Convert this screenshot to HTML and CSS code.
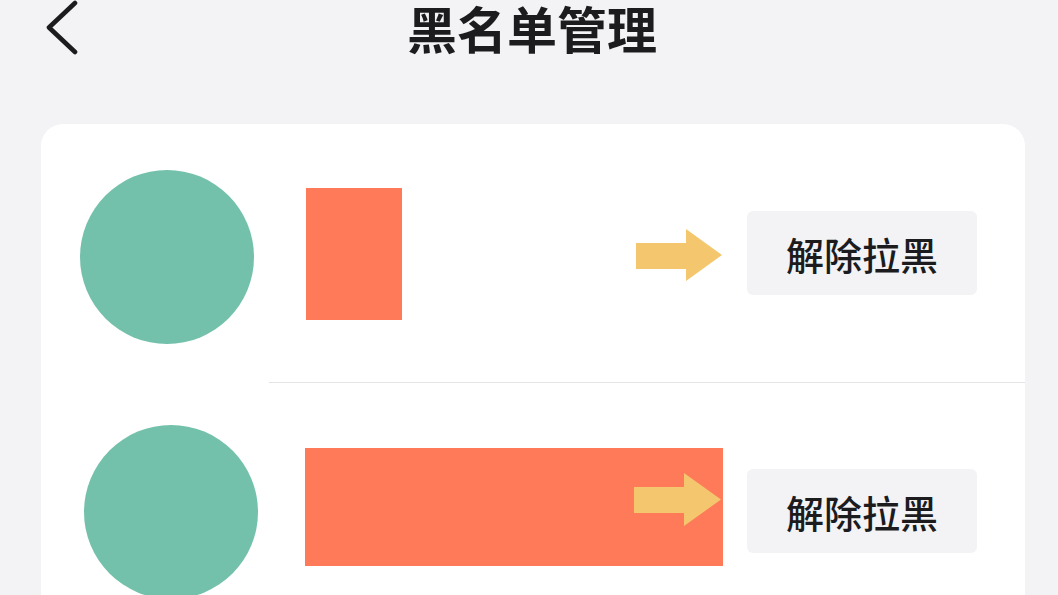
FILE: index.html
```html
<!DOCTYPE html>
<html lang="zh-CN">
<head>
<meta charset="utf-8">
<title>黑名单管理</title>
<link rel="stylesheet" href="styles.css">
</head>
<body>
<header class="header">
  <div class="back">
    <svg width="34" height="58" viewBox="0 0 34 58" aria-hidden="true">
      <path d="M30 3 L4 27.5 L30 52" fill="none" stroke="#1c1c1e" stroke-width="4.6" stroke-linecap="round" stroke-linejoin="round"/>
    </svg>
  </div>
  <h1 class="title">黑名单管理</h1>
  <div></div>
</header>
<main class="card">
  <div class="row">
    <div class="avatar avatar-first"></div>
    <div class="redact redact-first"></div>
    <div class="actions">
      <svg class="arrow" width="86" height="52" viewBox="0 0 86 52" aria-hidden="true">
        <polygon points="0,14 50,14 50,0 86,26 50,52 50,40 0,40" fill="#f4c76f"/>
      </svg>
      <button class="unblock">解除拉黑</button>
    </div>
  </div>
  <div class="divider"></div>
  <div class="row">
    <div class="avatar avatar-second"></div>
    <div class="redact redact-second">
      <svg class="arrow-inner" width="87" height="53" viewBox="0 0 87 53" aria-hidden="true">
        <polygon points="0,14 50,14 50,0 87,26.5 50,53 50,40 0,40" fill="#f4c76f"/>
      </svg>
    </div>
    <div class="actions">
      <button class="unblock unblock-second">解除拉黑</button>
    </div>
  </div>
</main>
</body>
</html>
```

FILE: styles.css
```css
* { box-sizing: border-box; }

html, body {
  margin: 0;
  padding: 0;
  height: 100%;
  overflow: hidden;
}

body {
  background: #f3f3f5;
  font-family: "Noto Sans CJK SC", "Noto Sans", sans-serif;
  color: #1c1c1e;
  width: 1058px;
}

.header {
  height: 62px;
  display: grid;
  grid-template-columns: 1fr auto 1fr;
  align-items: start;
}

.back {
  padding-left: 45px;
  line-height: 0;
}

.title {
  margin: 0;
  font-size: 50px;
  font-weight: 700;
  line-height: 54px;
  padding-left: 6px;
  color: #1c1c1e;
}

.card {
  margin: 62px 0 0 41px;
  width: 984px;
  background: #ffffff;
  border-radius: 22px 22px 0 0;
}

.row {
  height: 258px;
  display: flex;
  align-items: center;
}

.avatar {
  width: 174px;
  height: 174px;
  border-radius: 50%;
  background: #73c1aa;
  flex: none;
}

.avatar-first {
  margin-left: 39px;
  margin-top: 8px;
}

.avatar-second {
  margin-left: 43px;
}

.redact {
  background: #fe7a59;
  flex: none;
}

.redact-first {
  width: 96px;
  height: 132px;
  margin-left: 52px;
  margin-top: 2px;
}

.redact-second {
  width: 418px;
  height: 118px;
  margin-left: 47px;
  margin-top: -10px;
  display: flex;
  justify-content: flex-end;
  align-items: flex-start;
  padding-top: 25px;
  padding-right: 2px;
}

.arrow-inner { display: block; }

.actions {
  margin-left: auto;
  margin-right: 48px;
  display: flex;
  align-items: center;
}

.arrow {
  display: block;
  margin-right: 25px;
  margin-top: 4px;
}

.unblock {
  width: 230px;
  height: 84px;
  border: none;
  border-radius: 6px;
  background: #f3f3f5;
  font-family: "Noto Sans CJK SC", "Noto Sans", sans-serif;
  font-size: 38px;
  font-weight: 500;
  color: #1c1c1e;
  padding: 0;
}

.unblock-second {
  margin-top: -2px;
}

.divider {
  height: 1px;
  margin-left: 228px;
  background: #e4e4e6;
}
```
